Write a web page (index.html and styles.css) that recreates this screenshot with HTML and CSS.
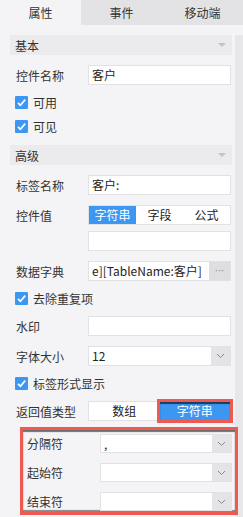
FILE: index.html
```html
<!DOCTYPE html>
<html lang="zh">
<head>
    <meta charset="UTF-8">
    <title>属性面板</title>
    <link rel="stylesheet" href="styles.css">
</head>
<body>
    <div class="tabs">
        <div class="tab active">属性</div>
        <div class="tab">事件</div>
        <div class="tab">移动端</div>
    </div>

    <div class="main">
        <div class="panel">
            <div class="section">基本<span class="caret"></span></div>

            <div class="row">
                <div class="label">控件名称</div>
                <div class="input">客户</div>
            </div>
            <div class="check">
                <span class="box"><svg width="13" height="13" viewBox="0 0 13 13"><path d="M3 6.8 L5.4 9.3 L10.2 3.6" fill="none" stroke="#fff" stroke-width="1.7"/></svg></span>可用
            </div>
            <div class="check">
                <span class="box"><svg width="13" height="13" viewBox="0 0 13 13"><path d="M3 6.8 L5.4 9.3 L10.2 3.6" fill="none" stroke="#fff" stroke-width="1.7"/></svg></span>可见
            </div>

            <div class="section">高级<span class="caret"></span></div>

            <div class="row">
                <div class="label">标签名称</div>
                <div class="input">客户:</div>
            </div>
            <div class="row">
                <div class="label">控件值</div>
                <div class="seg">
                    <div class="seg-item on">字符串</div>
                    <div class="seg-item">字段</div>
                    <div class="seg-item">公式</div>
                </div>
            </div>
            <div class="row sub">
                <div class="label"></div>
                <div class="input"></div>
            </div>
            <div class="row">
                <div class="label">数据字典</div>
                <div class="input with-btn">
                    <span class="value">e][TableName:客户]</span>
                    <span class="more">···</span>
                </div>
            </div>
            <div class="check">
                <span class="box"><svg width="13" height="13" viewBox="0 0 13 13"><path d="M3 6.8 L5.4 9.3 L10.2 3.6" fill="none" stroke="#fff" stroke-width="1.7"/></svg></span>去除重复项
            </div>
            <div class="row">
                <div class="label">水印</div>
                <div class="input"></div>
            </div>
            <div class="row">
                <div class="label">字体大小</div>
                <div class="input with-btn">
                    <span class="value">12</span>
                    <span class="arrow"><svg width="9" height="6" viewBox="0 0 9 6"><path d="M1 1 L4.5 4.5 L8 1" fill="none" stroke="#888" stroke-width="1"/></svg></span>
                </div>
            </div>
            <div class="check">
                <span class="box"><svg width="13" height="13" viewBox="0 0 13 13"><path d="M3 6.8 L5.4 9.3 L10.2 3.6" fill="none" stroke="#fff" stroke-width="1.7"/></svg></span>标签形式显示
            </div>
            <div class="row">
                <div class="label">返回值类型</div>
                <div class="seg">
                    <div class="seg-item">数组</div>
                    <div class="seg-item on marked">字符串</div>
                </div>
            </div>

            <div class="group">
                <div class="row">
                    <div class="label">分隔符</div>
                    <div class="input with-btn">
                        <span class="value">,</span>
                        <span class="arrow"><svg width="9" height="6" viewBox="0 0 9 6"><path d="M1 1 L4.5 4.5 L8 1" fill="none" stroke="#888" stroke-width="1"/></svg></span>
                    </div>
                </div>
                <div class="row">
                    <div class="label">起始符</div>
                    <div class="input with-btn">
                        <span class="value"></span>
                        <span class="arrow"><svg width="9" height="6" viewBox="0 0 9 6"><path d="M1 1 L4.5 4.5 L8 1" fill="none" stroke="#888" stroke-width="1"/></svg></span>
                    </div>
                </div>
                <div class="row">
                    <div class="label">结束符</div>
                    <div class="input with-btn">
                        <span class="value"></span>
                        <span class="arrow"><svg width="9" height="6" viewBox="0 0 9 6"><path d="M1 1 L4.5 4.5 L8 1" fill="none" stroke="#888" stroke-width="1"/></svg></span>
                    </div>
                </div>
            </div>
        </div>
        <div class="scrollbar"></div>
    </div>
</body>
</html>
```

FILE: styles.css
```css
body {
    font-family: "Noto Sans CJK SC", "Noto Sans", sans-serif;
    font-size: 12px;
    color: #333;
    margin: 0;
    padding: 0;
    width: 243px;
    height: 517px;
    overflow: hidden;
    background-color: #f4f4f6;
}

.tabs {
    display: flex;
    height: 25px;
    background-color: #e3e3e5;
}

.tab {
    flex: 1;
    text-align: center;
    line-height: 25px;
    font-size: 12px;
    color: #333;
}

.tab.active {
    background-color: #f4f4f6;
}

.main {
    display: flex;
    height: 492px;
}

.panel {
    width: 235px;
    flex: none;
}

.scrollbar {
    width: 8px;
    margin-top: 10px;
    background-color: #e7e7e9;
}

.section {
    display: flex;
    align-items: center;
    justify-content: space-between;
    height: 20px;
    margin: 10px 3px 0 10px;
    padding: 0 6px 0 5px;
    background-color: #ebebed;
    color: #333;
}

.caret {
    width: 0;
    height: 0;
    border-left: 4px solid transparent;
    border-right: 4px solid transparent;
    border-top: 4px solid #c4c4c6;
}

.row {
    display: flex;
    align-items: center;
    margin-top: 10px;
    padding: 0 4px 0 16px;
}

.row.sub {
    margin-top: 6px;
}

.label {
    width: 72px;
    flex: none;
}

.input {
    flex: 1;
    height: 20px;
    line-height: 18px;
    box-sizing: border-box;
    padding: 0 3px;
    background-color: white;
    border: 1px solid #e2e2e4;
    color: #222;
    white-space: nowrap;
    overflow: hidden;
}

.input.with-btn {
    display: flex;
    padding-right: 0;
}

.value {
    flex: 1;
    overflow: hidden;
}

.more {
    width: 21px;
    flex: none;
    background-color: #dedee0;
    color: #8a8a8c;
    font-family: "DejaVu Sans", sans-serif;
    font-size: 10px;
    text-align: center;
}

.arrow {
    width: 19px;
    flex: none;
    display: flex;
    align-items: center;
    justify-content: center;
    background-color: #e4e4e6;
}

.check {
    display: flex;
    align-items: center;
    height: 24px;
    margin-top: 5px;
    padding-left: 15px;
}

.check + .check {
    margin-top: 0;
}

.check + .section {
    margin-top: 7px;
}

.check + .row {
    margin-top: 6px;
}

.box {
    width: 13px;
    height: 13px;
    margin-right: 5px;
    background-color: #3c97f3;
    border-radius: 1px;
    display: flex;
}

.seg {
    flex: 1;
    display: flex;
    height: 20px;
    background-color: white;
    border: 1px solid #e2e2e4;
    box-sizing: border-box;
}

.seg-item {
    flex: 1;
    text-align: center;
    line-height: 18px;
    color: #222;
}

.seg-item.on {
    background-color: #3c97f3;
    color: white;
}

.seg-item.marked {
    outline: 3px solid #ee5a4f;
    box-shadow: inset 0 2px 1px rgba(0, 0, 0, 0.6);
}

.group {
    position: relative;
    margin: 6px -3px 0 20px;
    padding: 4px 0 0;
    border: 3px solid #ee5a4f;
    box-shadow: inset 0 2px 1px rgba(0, 0, 0, 0.55), inset 0 -2px 1px rgba(0, 0, 0, 0.45);
    height: 78px;
    box-sizing: content-box;
}

.group .row {
    padding: 0 3px 0 4px;
}

.group .row:first-child {
    margin-top: 0;
}

.group .label {
    width: 73px;
}

.group .input {
    height: 19px;
}
```
